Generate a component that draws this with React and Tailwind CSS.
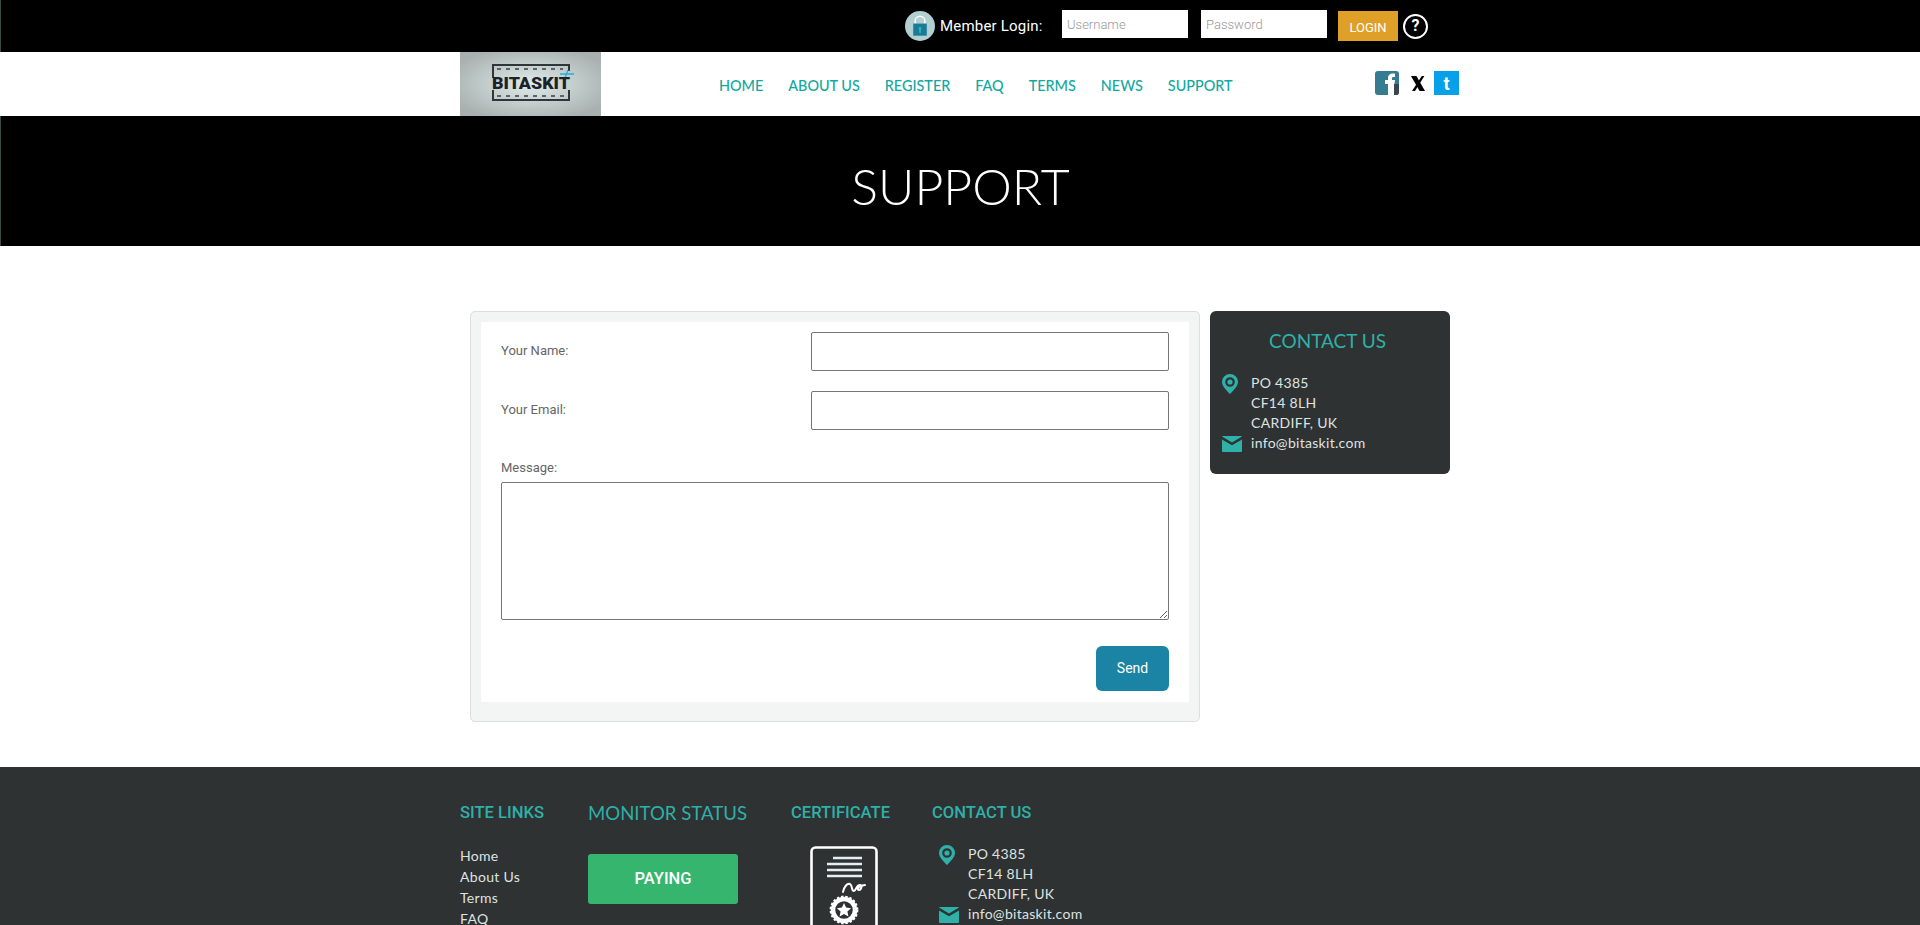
import React from "react";

const navLinks = ["Home", "About Us", "Register", "FAQ", "Terms", "News", "Support"];
const footerLinks = ["Home", "About Us", "Terms", "FAQ", "Support"];
const address = ["PO 4385", "CF14 8LH", "CARDIFF, UK"];

function PinIcon() {
    return (
        <svg width="16" height="20" viewBox="0 0 16 20">
            <path fill="#2fb0a8" fillRule="evenodd" d="M8 0a8 8 0 0 1 8 8c0 4.2-4.6 8.6-8 12C4.6 16.6 0 12.2 0 8a8 8 0 0 1 8-8zm0 3.2a4.8 4.8 0 1 0 0 9.6 4.8 4.8 0 0 0 0-9.6z" />
            <circle cx="8" cy="8" r="2.6" fill="#2fb0a8" />
        </svg>
    );
}

function MailIcon() {
    return (
        <svg width="20" height="16" viewBox="0 0 20 16">
            <path fill="#2fb0a8" d="M1 0h18a1 1 0 0 1 1 .6L10 6.4 0 .6A1 1 0 0 1 1 0z" />
            <path fill="#2fb0a8" d="M0 3.4l10 5.8 10-5.8V15a1 1 0 0 1-1 1H1a1 1 0 0 1-1-1z" />
        </svg>
    );
}

function LockIcon() {
    return (
        <svg width="30" height="30" viewBox="0 0 31 31">
            <circle cx="15.5" cy="15.5" r="15.5" fill="#b2d0d1" />
            <path d="M10.5 13V10.5a5 5 0 0 1 10 0V13" fill="none" stroke="#fff" strokeWidth="1.6" />
            <rect x="8.5" y="13" width="14" height="12.5" fill="#1b7a98" />
            <rect x="14.6" y="17.5" width="1.8" height="5" fill="#36b5ad" />
            <circle cx="15.5" cy="18" r="1.5" fill="#36b5ad" />
        </svg>
    );
}

function FacebookIcon() {
    return (
        <svg width="24" height="24" viewBox="0 0 24 24">
            <rect width="24" height="24" rx="3" fill="#357c90" />
            <path d="M19 24V13h5v8a3 3 0 0 1-3 3z" fill="#37474f" />
            <path fill="#fff" d="M13 24V13h-3V9h3V7c0-3 1.8-4.6 4.5-4.6H20v3.6h-1.6c-1.1 0-1.4.5-1.4 1.5V9h3l-.5 4H19v11z" />
        </svg>
    );
}

function XIcon() {
    return (
        <svg width="14" height="15" viewBox="0 0 14 15">
            <path d="M0 0h5.4L14 15H8.6z" fill="#000" />
            <path d="M10.8 0h2.6L4 15H1z" fill="#000" />
        </svg>
    );
}

function CertificateIcon() {
    return (
        <svg width="68" height="100" viewBox="0 0 68 100" fill="none" stroke="#fff">
            <rect x="1.5" y="1.5" width="65" height="97" rx="4" strokeWidth="2.6" />
            <path d="M23 12h29M17 18h35M17 24h35M17 30h35" strokeWidth="2.6" stroke="#e4eeee" />
            <path d="M33 46c1-5 4-9 7-8 3 2 1 7 4 7 2 0 2-6 6-6 3 0 1 5 -1 5s-2-4 6-5" strokeWidth="2" strokeLinecap="round" />
            <circle cx="34" cy="64" r="11" strokeWidth="4.5" />
            <circle cx="34" cy="64" r="13.2" strokeWidth="2.4" strokeDasharray="2.4 1.8" />
            <path fill="#fff" stroke="none" d="M34 57l2.1 4.6 5 .6-3.7 3.4 1 5-4.4-2.5-4.4 2.5 1-5-3.7-3.4 5-.6z" />
        </svg>
    );
}

function Address() {
    return (
        <div className="font-[Lato,sans-serif] text-[14px] leading-[20px] tracking-[0.3px] text-[#dfe2e2]">
            <div className="flex gap-[9px]">
                <div className="w-[20px] pt-[1px]"><PinIcon /></div>
                <div>
                    {address.map((line) => <div key={line}>{line}</div>)}
                </div>
            </div>
            <div className="flex items-center gap-[9px]">
                <div className="w-[20px] pt-[2px]"><MailIcon /></div>
                <div>info@bitaskit.com</div>
            </div>
        </div>
    );
}

function Logo() {
    return (
        <div className="h-[64px] w-[141px] bg-[radial-gradient(ellipse_at_center,#e0eaea_0%,#c5d0cf_40%,#a8b1b0_85%)]">
            <svg width="141" height="64" viewBox="0 0 141 64">
                <path d="M33 26V13h76v6" fill="none" stroke="#30363a" strokeWidth="2" />
                <path d="M37 17h66" stroke="#5c6468" strokeWidth="2" strokeDasharray="4 5" />
                <path d="M33 38v10h76V38" fill="none" stroke="#30363a" strokeWidth="2" />
                <path d="M37 44h68" stroke="#5c6468" strokeWidth="2" strokeDasharray="4 5" />
                <path d="M100 22h14M108 18l-3 8" stroke="#20b0dc" strokeWidth="1.4" />
                <text x="32" y="37" textLength="78" lengthAdjust="spacingAndGlyphs" fontFamily="Roboto, sans-serif" fontWeight="900" fontSize="16" fill="#1c2226">BITASKIT</text>
                <path d="M40 57h62" stroke="#b9c2c1" strokeWidth="1" />
            </svg>
        </div>
    );
}

export default function App() {
    return (
        <div className="font-[Roboto,sans-serif]">
            {/* top login bar */}
            <div className="flex h-[52px] items-center border-l border-[#3a4a48] bg-black pl-[904px]">
                <LockIcon />
                <span className="ml-[5px] w-[122px] whitespace-nowrap text-[15px] tracking-[0.2px] text-white">Member Login:</span>
                <input className="mb-[4px] h-[28px] w-[126px] bg-white px-[5px] text-[13px] font-light outline-none placeholder:text-[#999]" placeholder="Username" />
                <input className="mb-[4px] ml-[13px] h-[28px] w-[126px] bg-white px-[5px] text-[13px] font-light outline-none placeholder:text-[#999]" placeholder="Password" />
                <button className="ml-[11px] h-[30px] w-[60px] bg-[#e0a028] pt-[3px] text-[13px] text-white">LOGIN</button>
                <div className="ml-[5px] flex h-[25px] w-[25px] items-center justify-center rounded-full border-2 border-white text-[16px] font-bold text-white">?</div>
            </div>

            {/* nav */}
            <div className="mx-auto flex h-[64px] w-[1000px] items-center pr-px">
                <Logo />
                <nav className="ml-[118px] flex gap-[25px] pt-[4px] font-[Lato,sans-serif] text-[14.4px] font-medium uppercase text-[#10a8a0]">
                    {navLinks.map((link) => <a key={link} href="#">{link}</a>)}
                </nav>
                <div className="mb-[2px] ml-auto flex items-center">
                    <FacebookIcon />
                    <span className="ml-[12px] mr-[9px]"><XIcon /></span>
                    <span className="flex h-[24px] w-[25px] items-center justify-center bg-[#08a0e8] text-[18px] font-bold text-white">t</span>
                </div>
            </div>

            {/* banner */}
            <div className="flex h-[130px] items-center justify-center border-l border-[#3a4a48] bg-black pt-[10px]">
                <h1 className="font-[Lato,sans-serif] text-[50px] font-light text-white">SUPPORT</h1>
            </div>

            {/* content */}
            <div className="mx-auto flex h-[521px] w-[980px] gap-[10px] pt-[65px]">
                <div className="h-[411px] w-[730px] rounded-[5px] border border-[#dcdfdf] bg-[#f3f5f5] p-[10px]">
                    <form className="h-[380px] bg-white px-[20px] pt-[10px] text-[13px] text-[#666]">
                        <div className="flex h-[39px] items-center justify-between">
                            <label className="pb-[2px]">Your Name:</label>
                            <input className="h-[39px] w-[358px] rounded-[2px] border border-[#767676]" />
                        </div>
                        <div className="mt-[20px] flex h-[39px] items-center justify-between">
                            <label className="pb-[2px]">Your Email:</label>
                            <input className="h-[39px] w-[358px] rounded-[2px] border border-[#767676]" />
                        </div>
                        <label className="mt-[23px] block leading-[29px]">Message:</label>
                        <textarea className="block h-[138px] w-full rounded-[2px] border border-[#767676]" />
                        <div className="mt-[26px] flex justify-end">
                            <button className="h-[45px] w-[73px] rounded-[6px] bg-[#1b84a4] text-[14px] text-white">Send</button>
                        </div>
                    </form>
                </div>
                <div className="h-[163px] w-[240px] rounded-[6px] bg-[#2e3233] px-[12px] pt-[18px]">
                    <h3 className="pl-[47px] font-[Lato,sans-serif] text-[19px] leading-[23px] text-[#2fb0a8]">CONTACT US</h3>
                    <div className="mt-[21px]">
                        <Address />
                    </div>
                </div>
            </div>

            {/* footer */}
            <div className="bg-[#2e3233] pt-[35px] pb-[40px]">
                <div className="mx-auto flex w-[1000px]">
                    <div className="w-[128px]">
                        <h4 className="text-[16.6px] font-medium leading-[22px] text-[#2fb0a8]">SITE LINKS</h4>
                        <ul className="mt-[21px] font-[Lato,sans-serif] text-[14px] leading-[21px] tracking-[0.3px] text-[#dfe2e2]">
                            {footerLinks.map((link) => <li key={link}>{link}</li>)}
                        </ul>
                    </div>
                    <div className="w-[203px]">
                        <h4 className="font-[Lato,sans-serif] text-[18.6px] leading-[22px] text-[#2fb0a8]">MONITOR STATUS</h4>
                        <div className="mt-[30px] flex h-[50px] w-[150px] items-center justify-center rounded-[3px] bg-[#36b56f] text-[16.5px] font-medium text-white">PAYING</div>
                    </div>
                    <div className="w-[141px]">
                        <h4 className="text-[16.6px] font-medium leading-[22px] text-[#2fb0a8]">CERTIFICATE</h4>
                        <div className="ml-[19px] mt-[22px]"><CertificateIcon /></div>
                    </div>
                    <div>
                        <h4 className="text-[16.6px] font-medium leading-[22px] text-[#2fb0a8]">CONTACT US</h4>
                        <div className="ml-[7px] mt-[20px]">
                            <Address />
                        </div>
                    </div>
                </div>
            </div>
        </div>
    );
}
